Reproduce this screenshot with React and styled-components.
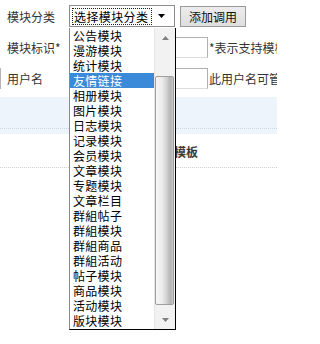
import React from 'react';
import styled, { createGlobalStyle } from 'styled-components';

const GlobalStyle = createGlobalStyle`
    html, body {
        margin: 0;
        padding: 0;
        background: #fff;
        overflow: hidden;
    }
    body {
        font-family: "Noto Sans CJK SC", "Liberation Sans", sans-serif;
        font-size: 12px;
        color: #333;
    }
`

const Page = styled.div`
    position: relative;
    width: 277px;
    height: 344px;
    overflow: hidden;
`

const Row = styled.div`
    display: flex;
    align-items: center;
    margin-top: ${p => p.$gap || 0}px;
    padding-top: ${p => p.$top}px;
    height: ${p => p.$height}px;
    white-space: nowrap;
`

const Label = styled.div`
    width: 69px;
    padding-left: ${p => (p.$line ? 6 : 7)}px;
    box-sizing: border-box;
    flex: none;
    line-height: 21px;
    border-left: ${p => (p.$line ? '1px solid #b4b4b4' : 'none')};
`

const SelectBox = styled.div`
    width: 106px;
    height: 22px;
    box-sizing: border-box;
    border: 1px solid #8c8c8c;
    display: flex;
    align-items: center;
    padding-left: 2px;
    background: #fff;
    flex: none;
`

const SelectText = styled.span`
    width: 80px;
    height: 17px;
    line-height: 15px;
    box-sizing: border-box;
    border: 1px dotted #222;
    padding-left: 1px;
    color: #000;
    letter-spacing: 0.4px;
`

const SelectArrow = styled.span`
    flex: 1;
    display: flex;
    justify-content: center;
    align-items: center;
    padding-right: 4px;
`

const Button = styled.button`
    margin-left: 5px;
    width: 66px;
    height: 21px;
    padding: 0;
    border: 1px solid #9a9a9a;
    background: linear-gradient(#ececec, #dedede);
    font-family: inherit;
    font-size: 12px;
    color: #111;
    line-height: 19px;
    flex: none;
`

const Input = styled.div`
    width: 139px;
    height: 21px;
    box-sizing: border-box;
    border: 1px solid #b0b0b0;
    border-bottom-color: #dcdcdc;
    background: #fff;
    flex: none;
`

const Hint = styled.span`
    margin-left: 1px;
    line-height: 21px;
`

const Band = styled.div`
    margin-top: 8px;
    height: 37px;
    background: #eef4fb;
`

const BandLine = styled.div`
    height: 31px;
    border-bottom: 1px dotted #c9d6e4;
`

const HeaderRow = styled.div`
    height: 31px;
    display: flex;
    align-items: center;
    padding-left: 150px;
    border-bottom: 1px dotted #cfcfcf;
    font-weight: bold;
    color: #3a3a3a;
    padding-top: 2px;
`

const DropList = styled.div`
    position: absolute;
    left: 69px;
    top: 28px;
    width: 107px;
    height: 302px;
    box-sizing: border-box;
    border: 1px solid #000;
    border-top: none;
    border-left-color: #8a8a8a;
    background: #fff;
    display: flex;
`

const Options = styled.div`
    flex: 1;
    overflow: hidden;
`

const Option = styled.div`
    height: 15px;
    line-height: 15px;
    padding-left: 3px;
    color: ${p => (p.$active ? '#fff' : '#000')};
    background: ${p => (p.$active ? '#3a8ad9' : 'transparent')};
    letter-spacing: 0.3px;
    white-space: nowrap;
`

const Scrollbar = styled.div`
    width: 20px;
    display: flex;
    flex-direction: column;
    background: #f2f2f2;
    border-left: 1px solid #e6e6e6;
`

const ScrollButton = styled.div`
    height: 19px;
    display: flex;
    align-items: center;
    justify-content: center;
    flex: none;
`

const Track = styled.div`
    flex: 1;
    padding-top: ${p => p.$offset}px;
    padding-bottom: 2px;
`

const Thumb = styled.div`
    height: ${p => p.$size}px;
    margin-right: 1px;
    box-sizing: border-box;
    border: 1px solid #9e9e9e;
    border-radius: 2px;
    background: linear-gradient(to right, #f6f6f6 0%, #ececec 35%, #d4d4d4 60%, #b4b4b4 85%, #c8c8c8 100%);
`

const Triangle = ({ up, color, w = 7, h = 4 }) => (
    <svg width={w} height={h} viewBox={`0 0 ${w} ${h}`}>
        {up
            ? <polygon points={`0,${h} ${w},${h} ${w / 2},0`} fill={color} />
            : <polygon points={`0,0 ${w},0 ${w / 2},${h}`} fill={color} />}
    </svg>
);

const options = [
    '公告模块', '漫游模块', '统计模块', '友情链接', '相册模块',
    '图片模块', '日志模块', '记录模块', '会员模块', '文章模块',
    '专题模块', '文章栏目', '群組帖子', '群組模块', '群組商品',
    '群組活动', '帖子模块', '商品模块', '活动模块', '版块模块',
];

const App = () => (
    <Page>
        <GlobalStyle />
        {/* form rows */}
        <Row $top={5} $height={22}>
            <Label>模块分类</Label>
            <SelectBox>
                <SelectText>选择模块分类</SelectText>
                <SelectArrow><Triangle color="#000" w={7} h={4} /></SelectArrow>
            </SelectBox>
            <Button>添加调用</Button>
        </Row>
        <Row $top={4} $height={21} $gap={6}>
            <Label>模块标识*</Label>
            <Input />
            <Hint>*表示支持模板调用</Hint>
        </Row>
        <Row $top={0} $height={21} $gap={10}>
            <Label $line>用户名</Label>
            <Input />
            <Hint>此用户名可管理该模块</Hint>
        </Row>
        <Band><BandLine /></Band>
        <HeaderRow>调用模板</HeaderRow>

        {/* open select dropdown */}
        <DropList>
            <Options>
                {options.map((name, key) => (
                    <Option key={key} $active={key === 3}>{name}</Option>
                ))}
            </Options>
            <Scrollbar>
                <ScrollButton><Triangle up color="#808080" /></ScrollButton>
                <Track $offset={29}>
                    <Thumb $size={229} />
                </Track>
                <ScrollButton><Triangle color="#808080" /></ScrollButton>
            </Scrollbar>
        </DropList>
    </Page>
);

export default App;
